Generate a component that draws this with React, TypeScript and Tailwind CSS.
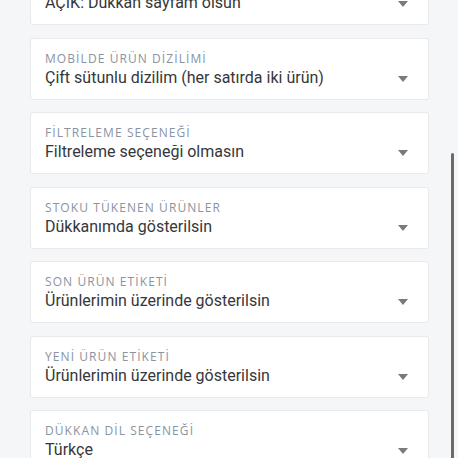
import React from "react";

const settings = [
  { label: "Dükkan sayfası", value: "AÇIK: Dükkan sayfam olsun" },
  { label: "Mobilde ürün dizilimi", value: "Çift sütunlu dizilim (her satırda iki ürün)" },
  { label: "Filtreleme seçeneği", value: "Filtreleme seçeneği olmasın" },
  { label: "Stoku tükenen ürünler", value: "Dükkanımda gösterilsin" },
  { label: "Son ürün etiketi", value: "Ürünlerimin üzerinde gösterilsin" },
  { label: "Yeni ürün etiketi", value: "Ürünlerimin üzerinde gösterilsin" },
  { label: "Dükkan dil seçeneği", value: "Türkçe" },
];

export default function App() {
  return (
    <div className="relative h-[458px] w-[458px] overflow-hidden bg-[#f5f6f8]">
      <div className="-mt-[37px] ml-[30px] flex w-[399px] flex-col gap-[12.5px]">
        {settings.map((s) => (
          <SelectCard key={s.label} label={s.label} value={s.value} />
        ))}
      </div>

      {/* scrollbar */}
      <div className="absolute left-[451px] top-[153px] h-[320px] w-[3px] rounded-full bg-[#6b6b6b]" />
    </div>
  );
}

function SelectCard({ label, value }: { label: string; value: string }) {
  return (
    <div className="h-[62px] rounded-[3px] border border-[#e7e9ec] bg-white pb-[10px] pl-[14px] pr-[20px] pt-[12px]">
      <div className="font-['Open_Sans',sans-serif] text-[12px] leading-[16px] tracking-[0.09em] text-[#8a93a0]">
        {label.toLocaleUpperCase("tr-TR")}
      </div>
      <div className="flex items-center justify-between">
        <span className="font-['Roboto',sans-serif] text-[16px] leading-[22px] text-[#36373a]">{value}</span>
        <svg width="10" height="6" viewBox="0 0 10 6" className="mt-[2px]">
          <polygon points="0,0 10,0 5,6" fill="#7a7a7a" />
        </svg>
      </div>
    </div>
  );
}
